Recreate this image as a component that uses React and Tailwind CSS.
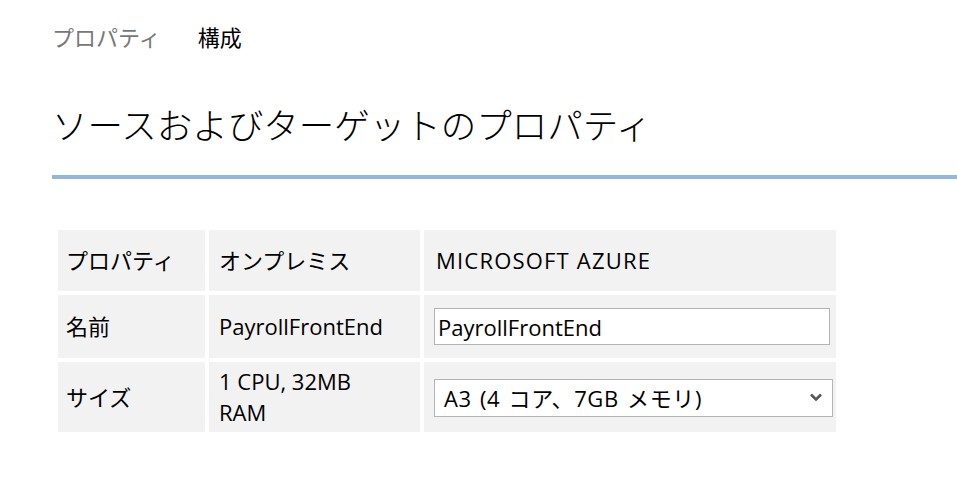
import React from 'react';

const font = { fontFamily: '"Open Sans", "Noto Sans CJK JP", sans-serif' };

const Cell = ({ children, className = '' }) => (
  <div className={`bg-[#f2f2f2] flex items-center ${className}`}>{children}</div>
);

const App = () => {
  return (
    <div className="w-[957px] h-[479px] bg-white overflow-hidden text-black" style={font}>
      {/* Tabs */}
      <div className="flex gap-[37px] pl-[52px] pt-[22px] text-[22px] leading-[30px]">
        <span className="text-[#777777]">プロパティ</span>
        <span className="text-black">構成</span>
      </div>

      {/* Title */}
      <h1 className="pl-[52px] mt-[50px] text-[35.5px] leading-[46px] font-light">
        ソースおよびターゲットのプロパティ
      </h1>

      <div className="ml-[52px] mt-[27px] h-[4px] bg-[#93b6da]"></div>

      {/* Table */}
      <div className="ml-[58px] mt-[51px] grid grid-cols-[147px_211px_412px] gap-[4px] text-[22px]">
        <Cell className="h-[61px] pl-[8px]">プロパティ</Cell>
        <Cell className="h-[61px] pl-[10px]">オンプレミス</Cell>
        <Cell className="h-[61px] pl-[12px] tracking-[1.2px]">MICROSOFT AZURE</Cell>

        <Cell className="h-[63px] pl-[8px]">名前</Cell>
        <Cell className="h-[63px] pl-[10px]">PayrollFrontEnd</Cell>
        <Cell className="h-[63px] pl-[10px]">
          <input
            type="text"
            defaultValue="PayrollFrontEnd"
            className="w-[396px] h-[37px] bg-white border border-[#b4b4b4] px-[3px] text-[22px] outline-none"
            style={font}
          />
        </Cell>

        <Cell className="h-[70px] pl-[8px]">サイズ</Cell>
        <Cell className="h-[70px] pl-[10px] leading-[31px]">
          <span>
            1 CPU, 32MB
            <br />
            RAM
          </span>
        </Cell>
        <Cell className="h-[70px] pl-[10px]">
          <div className="relative w-[399px] h-[38px] bg-white border border-[#b4b4b4] flex items-center pl-[9px] mt-[2px]">
            <span className="tracking-[0.6px] [word-spacing:2px]">A3 (4 コア、7GB メモリ)</span>
            <svg
              className="absolute right-[10px] top-[13px]"
              width="12"
              height="9"
              viewBox="0 0 12 9"
            >
              <path d="M1 1.5 L6 6.5 L11 1.5" fill="none" stroke="#555" strokeWidth="2.6" />
            </svg>
          </div>
        </Cell>
      </div>
    </div>
  );
};

export default App;
